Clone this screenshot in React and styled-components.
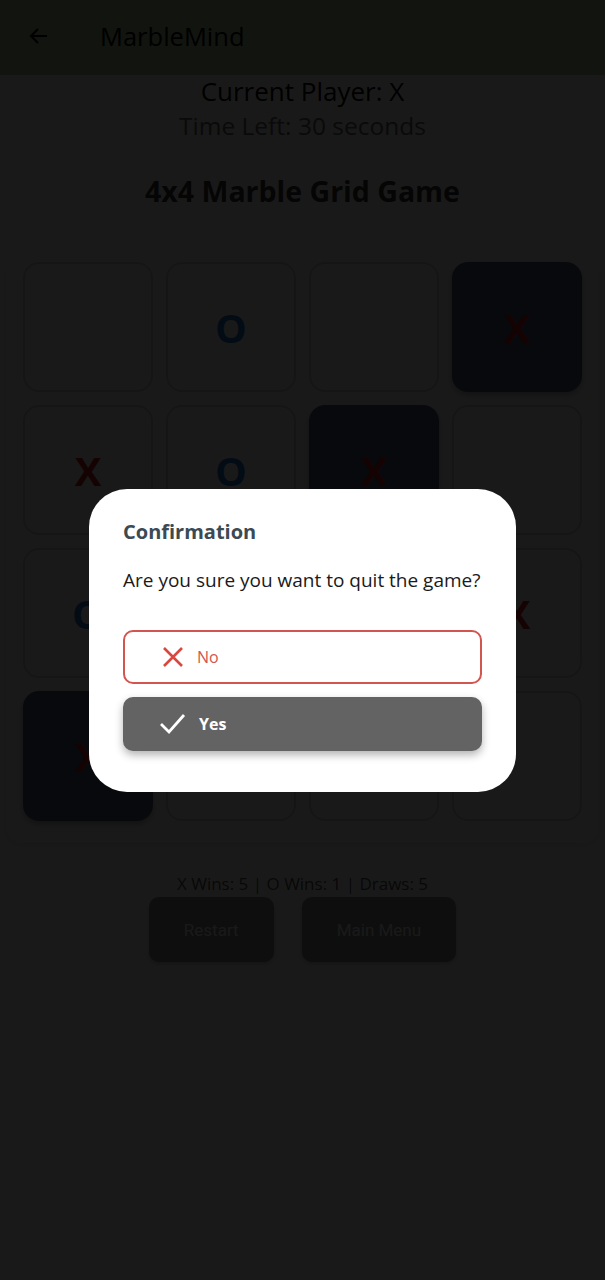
import React from 'react';
import styled, { createGlobalStyle } from 'styled-components';

const GlobalStyle = createGlobalStyle`
  html, body {
    margin: 0;
    padding: 0;
    background: #ffffff;
    font-family: "Open Sans", "Noto Sans", sans-serif;
  }
  * { box-sizing: border-box; }
`;

const Page = styled.div`
  min-height: 1280px;
  display: flex;
  flex-direction: column;
  background: #ffffff;
`;

const AppBar = styled.header`
  height: 75px;
  display: flex;
  align-items: center;
  padding-left: 27px;
  padding-bottom: 3px;
  background: #b4c896;
`;

const BackButton = styled.button`
  width: 24px;
  height: 24px;
  padding: 0;
  border: none;
  background: none;
  display: flex;
  margin-right: 49px;
`;

const AppTitle = styled.h1`
  margin: 0;
  font-size: 25.5px;
  font-weight: 400;
  color: #000;
`;

const Main = styled.main`
  display: flex;
  flex-direction: column;
  align-items: center;
`;

const Player = styled.div`
  margin-top: 1px;
  font-size: 26px;
  line-height: 30px;
  color: #000;
`;

const Timer = styled.div`
  margin-top: 2px;
  font-size: 24.5px;
  line-height: 36px;
  color: #666;
`;

const GameTitle = styled.h2`
  margin: 28px 0 0;
  font-size: 28.5px;
  line-height: 38px;
  font-weight: 700;
  color: #3a3a3a;
`;

const BoardCard = styled.section`
  align-self: stretch;
  margin: 48px 6px 0;
  padding: 4px 17px 22px;
  border-radius: 16px;
  background: #ffffff;
  box-shadow: 0 2px 8px rgba(0, 0, 0, 0.12);
`;

const Board = styled.div`
  display: grid;
  grid-template-columns: repeat(4, 130px);
  grid-auto-rows: 130px;
  gap: 13px;
`;

const Cell = styled.div`
  border-radius: 16px;
  border: ${p => (p.$filled ? 'none' : '2px solid #d4d4d4')};
  background: ${p => (p.$filled ? '#4a6278' : '#ffffff')};
  box-shadow: ${p => (p.$filled ? '0 3px 6px rgba(0,0,0,0.3)' : 'none')};
  display: flex;
  align-items: center;
  justify-content: center;
  font-family: "Open Sans", sans-serif;
  font-size: 40px;
  font-weight: 700;
  color: ${p => (p.$mark === 'X' ? '#d42424' : '#1e78c8')};
`;

const Stats = styled.div`
  margin-top: 30px;
  font-size: 17px;
  line-height: 22px;
  color: #555;
`;

const Actions = styled.div`
  display: flex;
  gap: 28px;
  margin-top: 2px;
`;

const ActionButton = styled.button`
  height: 65px;
  padding: 0 ${p => p.$pad}px;
  border: none;
  border-radius: 10px;
  background: #8a8a8a;
  color: #ffffff;
  font-family: Roboto, sans-serif;
  font-size: 17px;
  box-shadow: 0 2px 4px rgba(0, 0, 0, 0.25);
`;

const Backdrop = styled.div`
  position: fixed;
  inset: 0;
  background: rgba(0, 0, 0, 0.9);
  display: flex;
  align-items: center;
  justify-content: center;
`;

const Dialog = styled.div`
  width: 427px;
  padding: 29px 34px 41px;
  border-radius: 38px;
  background: #ffffff;
  display: flex;
  flex-direction: column;
`;

const DialogTitle = styled.h3`
  margin: 0;
  font-size: 20px;
  line-height: 28px;
  font-weight: 700;
  color: #3b4a53;
`;

const Message = styled.p`
  margin: 22px 0 0;
  font-size: 19px;
  line-height: 24px;
  color: #1a1a1a;
  white-space: nowrap;
`;

const Choice = styled.button`
  height: 54px;
  margin-top: ${p => p.$top}px;
  display: flex;
  align-items: center;
  gap: 12px;
  padding: 0 0 0 36px;
  border-radius: 10px;
  font-family: "Open Sans", sans-serif;
  font-size: 16px;
  ${p =>
    p.$primary
      ? `
    border: none;
    background: #636363;
    color: #ffffff;
    font-weight: 700;
    box-shadow: 0 4px 8px rgba(0, 0, 0, 0.3);
  `
      : `
    border: 2px solid #d3554f;
    background: #ffffff;
    color: #d3554f;
    font-weight: 400;
  `}
`;

const ArrowIcon = () => (
  <svg width="24" height="24" viewBox="0 0 24 24" fill="none" stroke="#000" strokeWidth="2">
    <path d="M20 12H4M11 5l-7 7 7 7" />
  </svg>
);

const CrossIcon = () => (
  <svg width="24" height="24" viewBox="0 0 24 24" fill="none" stroke="#d9473f" strokeWidth="2.6">
    <path d="M3 3l18 18M21 3L3 21" />
  </svg>
);

const CheckIcon = () => (
  <svg width="28" height="24" viewBox="0 0 28 24" fill="none" stroke="#fff" strokeWidth="2.8">
    <path d="M2 12l8 8L25 3" />
  </svg>
);

const cells = [
  '', 'O', '', 'X*',
  'X', 'O', 'X*', '',
  'O', '', '', 'X',
  'X*', '', '', '',
];

export default function App() {
  return (
    <>
      <GlobalStyle />
      <Page>
        <AppBar>
          <BackButton aria-label="Back"><ArrowIcon /></BackButton>
          <AppTitle>MarbleMind</AppTitle>
        </AppBar>
        <Main>
          <Player>Current Player: X</Player>
          <Timer>Time Left: 30 seconds</Timer>
          <GameTitle>4x4 Marble Grid Game</GameTitle>
          <BoardCard>
            <Board>
              {cells.map((c, i) => (
                <Cell key={i} $filled={c.endsWith('*')} $mark={c[0]}>
                  {c.replace('*', '')}
                </Cell>
              ))}
            </Board>
          </BoardCard>
          <Stats>X Wins: 5 | O Wins: 1 | Draws: 5</Stats>
          <Actions>
            <ActionButton $pad={35}>Restart</ActionButton>
            <ActionButton $pad={35}>Main Menu</ActionButton>
          </Actions>
        </Main>
      </Page>
      <Backdrop>
        <Dialog>
          <DialogTitle>Confirmation</DialogTitle>
          <Message>Are you sure you want to quit the game?</Message>
          <Choice $top={38}><CrossIcon />No</Choice>
          <Choice $top={13} $primary><CheckIcon />Yes</Choice>
        </Dialog>
      </Backdrop>
    </>
  );
}
